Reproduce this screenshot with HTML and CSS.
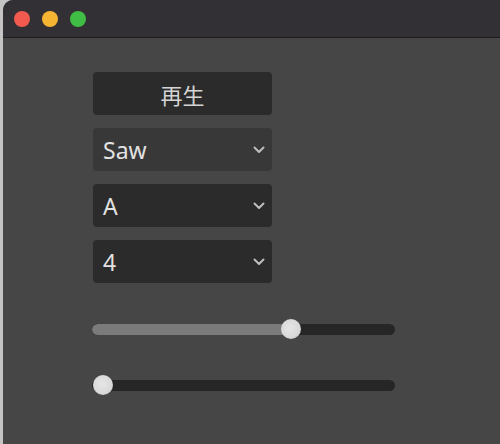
FILE: index.html
```html
<!DOCTYPE html>
<html>
<head>
<meta charset="utf-8">
<link rel="stylesheet" href="styles.css">
</head>
<body>
<div class="window">
  <div class="titlebar">
    <span class="light red"></span>
    <span class="light yellow"></span>
    <span class="light green"></span>
  </div>
  <div class="content">
    <div class="controls">
      <div class="btn">再生</div>
      <div class="select light-bg"><span>Saw</span><svg class="chev" width="12" height="8" viewBox="0 0 12 8"><path d="M1.5 1.5 L6 6 L10.5 1.5" fill="none" stroke="#bdbdbd" stroke-width="2" stroke-linecap="round" stroke-linejoin="round"/></svg></div>
      <div class="select"><span>A</span><svg class="chev" width="12" height="8" viewBox="0 0 12 8"><path d="M1.5 1.5 L6 6 L10.5 1.5" fill="none" stroke="#bdbdbd" stroke-width="2" stroke-linecap="round" stroke-linejoin="round"/></svg></div>
      <div class="select"><span>4</span><svg class="chev" width="12" height="8" viewBox="0 0 12 8"><path d="M1.5 1.5 L6 6 L10.5 1.5" fill="none" stroke="#bdbdbd" stroke-width="2" stroke-linecap="round" stroke-linejoin="round"/></svg></div>
    </div>
    <div class="sliders">
      <div class="slider">
        <div class="track"><div class="fill" style="width:199px"></div></div>
        <div class="thumb" style="left:189px"></div>
      </div>
      <div class="slider">
        <div class="track"></div>
        <div class="thumb" style="left:1px"></div>
      </div>
    </div>
  </div>
</div>
</body>
</html>
```
FILE: styles.css
```css
html, body {
  margin: 0;
  padding: 0;
  width: 500px;
  height: 444px;
  overflow: hidden;
  background: #c4c4c4;
}
.window {
  margin-left: 3px;
  height: 444px;
  border-top-left-radius: 10px;
  overflow: hidden;
  background: #464646;
  font-family: "Noto Sans", "Noto Sans CJK JP", sans-serif;
}
.titlebar {
  height: 37px;
  background: #323035;
  border-bottom: 1px solid #1e1e1f;
  display: flex;
  align-items: center;
  padding-left: 11px;
  gap: 12px;
}
.light {
  width: 16px;
  height: 16px;
  border-radius: 50%;
  display: block;
}
.red { background: #f25a50; }
.yellow { background: #f6b433; }
.green { background: #3fbd44; }
.content {
  padding-top: 34px;
  padding-left: 90px;
}
.controls {
  width: 179px;
  display: flex;
  flex-direction: column;
  gap: 13px;
}
.btn, .select {
  height: 43px;
  border-radius: 4px;
  background: #2b2b2b;
  color: #dcdcdc;
  font-size: 22px;
  box-sizing: border-box;
  display: flex;
  align-items: center;
}
.btn {
  justify-content: center;
  font-family: "Noto Sans CJK JP", sans-serif;
  color: #d4d4d4;
}
.select {
  justify-content: space-between;
  padding-left: 10px;
  padding-right: 7px;
  color: #e2e2e2;
  font-size: 23px;
}
.select.light-bg { background: #383838; }
.chev { display: block; margin-top: 1px; }
.sliders {
  margin-top: 36px;
  margin-left: -1px;
  width: 303px;
  display: flex;
  flex-direction: column;
  gap: 36px;
}
.slider {
  position: relative;
  height: 20px;
  display: flex;
  align-items: center;
}
.track {
  width: 100%;
  height: 11px;
  border-radius: 6px;
  background: #262626;
  overflow: hidden;
}
.fill {
  height: 100%;
  background: #7b7b7b;
  border-radius: 6px 0 0 6px;
}
.thumb {
  position: absolute;
  top: 0;
  width: 20px;
  height: 20px;
  border-radius: 50%;
  background: radial-gradient(circle at 45% 45%, #e6e6e6 0%, #d9d9d9 60%, #b9b9b9 100%);
}
```
